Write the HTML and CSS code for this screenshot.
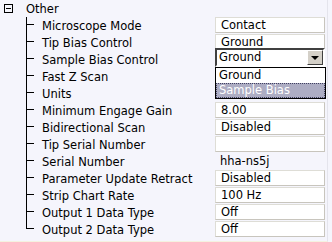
FILE: index.html
```html
<!DOCTYPE html>
<html>
<head>
<meta charset="utf-8">
<link rel="stylesheet" href="styles.css">
</head>
<body>
<div class="panel">
  <div class="head">
    <span class="toggle"><span class="minus"></span></span>
    <span class="title">Other</span>
  </div>
  <div class="rows">
    <div class="row"><span class="branch"></span><span class="label">Microscope Mode</span><span class="val box">Contact</span></div>
    <div class="row"><span class="branch"></span><span class="label">Tip Bias Control</span><span class="val box">Ground</span></div>
    <div class="row"><span class="branch"></span><span class="label">Sample Bias Control</span>
      <span class="val editor">
        <span class="combo"><span class="combo-text">Ground</span><span class="combo-btn"><span class="arrow"></span></span></span>
        <span class="list">
          <span class="item">Ground</span>
          <span class="item sel">Sample Bias</span>
        </span>
      </span>
    </div>
    <div class="row"><span class="branch"></span><span class="label">Fast Z Scan</span><span class="val"></span></div>
    <div class="row"><span class="branch"></span><span class="label">Units</span><span class="val"></span></div>
    <div class="row"><span class="branch"></span><span class="label">Minimum Engage Gain</span><span class="val box">8.00</span></div>
    <div class="row"><span class="branch"></span><span class="label">Bidirectional Scan</span><span class="val box">Disabled</span></div>
    <div class="row"><span class="branch"></span><span class="label">Tip Serial Number</span><span class="val box"></span></div>
    <div class="row"><span class="branch"></span><span class="label">Serial Number</span><span class="val plain">hha-ns5j</span></div>
    <div class="row"><span class="branch"></span><span class="label">Parameter Update Retract</span><span class="val box">Disabled</span></div>
    <div class="row"><span class="branch"></span><span class="label">Strip Chart Rate</span><span class="val box">100 Hz</span></div>
    <div class="row"><span class="branch"></span><span class="label">Output 1 Data Type</span><span class="val box">Off</span></div>
    <div class="row last"><span class="branch"></span><span class="label">Output 2 Data Type</span><span class="val box">Off</span></div>
  </div>
</div>
</body>
</html>
```
FILE: styles.css
```css
html, body {
  margin: 0;
  padding: 0;
}
body {
  width: 332px;
  height: 242px;
  background: #f5f5fc;
  font-family: "DejaVu Sans", sans-serif;
  font-size: 11.5px;
  color: #000;
  overflow: hidden;
}
.panel {
  width: 327px;
  height: 241px;
  border-right: 1px solid #e4e4ec;
  border-bottom: 1px solid #f4f2e0;
}
.head {
  height: 17px;
  display: flex;
  align-items: center;
}
.toggle {
  box-sizing: border-box;
  width: 9px;
  height: 9px;
  margin-left: 4px;
  margin-right: 13px;
  border: 1px solid #000;
  display: flex;
  align-items: center;
  justify-content: center;
}
.minus {
  width: 5px;
  height: 1px;
  background: #000;
}
.title {
  line-height: 17px;
  padding-top: 1px;
}
.rows {
  margin-left: 26px;
}
.row {
  height: 17px;
  display: grid;
  grid-template-columns: 16px 173px 110px;
  align-items: start;
}
.branch {
  height: 17px;
  background:
    linear-gradient(#000, #000) 0 7px / 8px 1px no-repeat,
    linear-gradient(#000, #000) 0 0 / 1px 100% no-repeat;
}
.last .branch {
  background:
    linear-gradient(#000, #000) 0 7px / 8px 1px no-repeat,
    linear-gradient(#000, #000) 0 0 / 1px 8px no-repeat;
}
.label {
  line-height: 17px;
  padding-top: 1px;
  white-space: nowrap;
}
.val {
  box-sizing: border-box;
  height: 16px;
  line-height: 14px;
  white-space: nowrap;
}
.box {
  background: #fff;
  border: 1px solid #c8c5bd;
  border-top-color: #deddd6;
  border-left-color: #deddd6;
  padding-left: 5px;
}
.plain {
  padding-left: 5px;
  line-height: 17px;
}
.editor {
  position: relative;
  top: -3px;
  height: auto;
}
.combo {
  box-sizing: border-box;
  display: flex;
  height: 19px;
  background: #fff;
  border: 2px solid;
  border-color: #404040 #fff #fff #404040;
}
.combo-text {
  flex: 1;
  padding-left: 2px;
  line-height: 15px;
}
.combo-btn {
  box-sizing: border-box;
  width: 16px;
  height: 15px;
  background: #d4d0c8;
  border: 1px solid;
  border-color: #fff #404040 #404040 #fff;
  display: flex;
  align-items: center;
  justify-content: center;
}
.arrow {
  width: 0;
  height: 0;
  border-left: 4px solid transparent;
  border-right: 4px solid transparent;
  border-top: 4px solid #000;
}
.list {
  position: absolute;
  left: 0;
  top: 19px;
  width: 111px;
  box-sizing: border-box;
  background: #fff;
  border: 1px solid #000;
  display: flex;
  flex-direction: column;
}
.item {
  height: 15px;
  line-height: 15px;
  padding-left: 3px;
}
.item.sel {
  box-sizing: border-box;
  background: #adadc3;
  color: #fff;
  border: 1px dotted #404060;
  padding-left: 2px;
  line-height: 13px;
}
```
